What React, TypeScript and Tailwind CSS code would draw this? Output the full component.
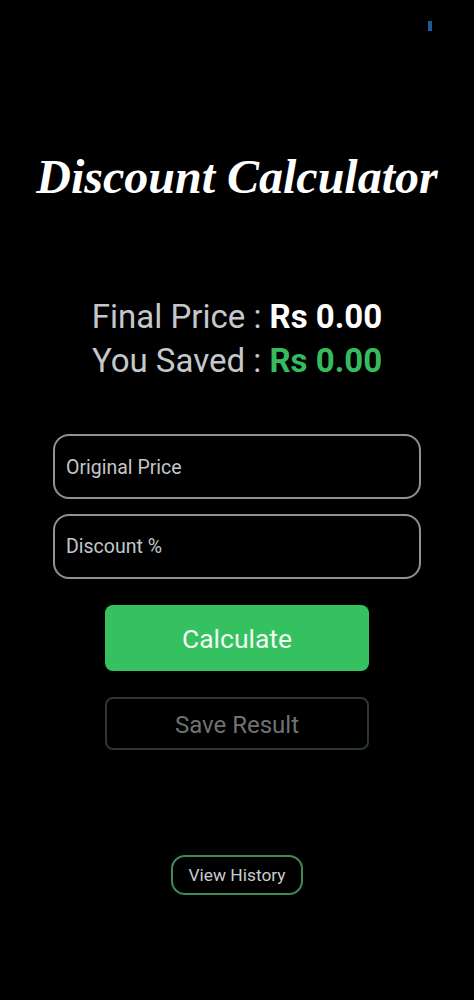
export default function App() {
  return (
    <div className="w-[474px] h-[1000px] bg-black flex flex-col items-center font-['Roboto',sans-serif] overflow-hidden">
      <div className="w-full h-[21px] shrink-0" />
      <div className="w-full flex justify-end pr-[42px] h-[10px] shrink-0">
        <div className="w-[4px] h-[10px] bg-[#1c5a9a]" />
      </div>
      <h1 className="mt-[114px] h-[64px] leading-[64px] text-[48px] font-bold italic text-white whitespace-nowrap font-['Liberation_Serif',serif]">
        Discount Calculator
      </h1>
      <div className="mt-[86px] flex flex-col items-center text-[33px] leading-[44px] text-[#c4c8cc]">
        <p>Final Price : <span className="font-bold text-white">Rs 0.00</span></p>
        <p>You Saved : <span className="font-bold text-[#37bb5f]">Rs 0.00</span></p>
      </div>
      <div className="mt-[51px] w-[368px] h-[65px] border-2 border-[#8e9296] rounded-[16px] flex items-center pl-[11px] pt-[2px] text-[19.5px] text-[#c3c7cb]">
        Original Price
      </div>
      <div className="mt-[15px] w-[368px] h-[65px] border-2 border-[#8e9296] rounded-[16px] flex items-center pl-[11px] text-[19.5px] text-[#c3c7cb]">
        Discount %
      </div>
      <div className="mt-[26px] w-[264px] h-[66px] bg-[#35c160] rounded-[8px] flex items-center justify-center pt-[2px] text-[26.5px] text-[#f0fbf3]">
        Calculate
      </div>
      <div className="mt-[26px] w-[264px] h-[53px] border-2 border-[#2a3830] rounded-[8px] flex items-center justify-center pt-[2px] text-[24px] text-[#6f7270]">
        Save Result
      </div>
      <div className="mt-[105px] w-[132px] h-[40px] border-2 border-[#3f8a56] rounded-[14px] flex items-center justify-center pt-[1px] text-[17.4px] text-[#c8cdd1]">
        View History
      </div>
    </div>
  );
}
